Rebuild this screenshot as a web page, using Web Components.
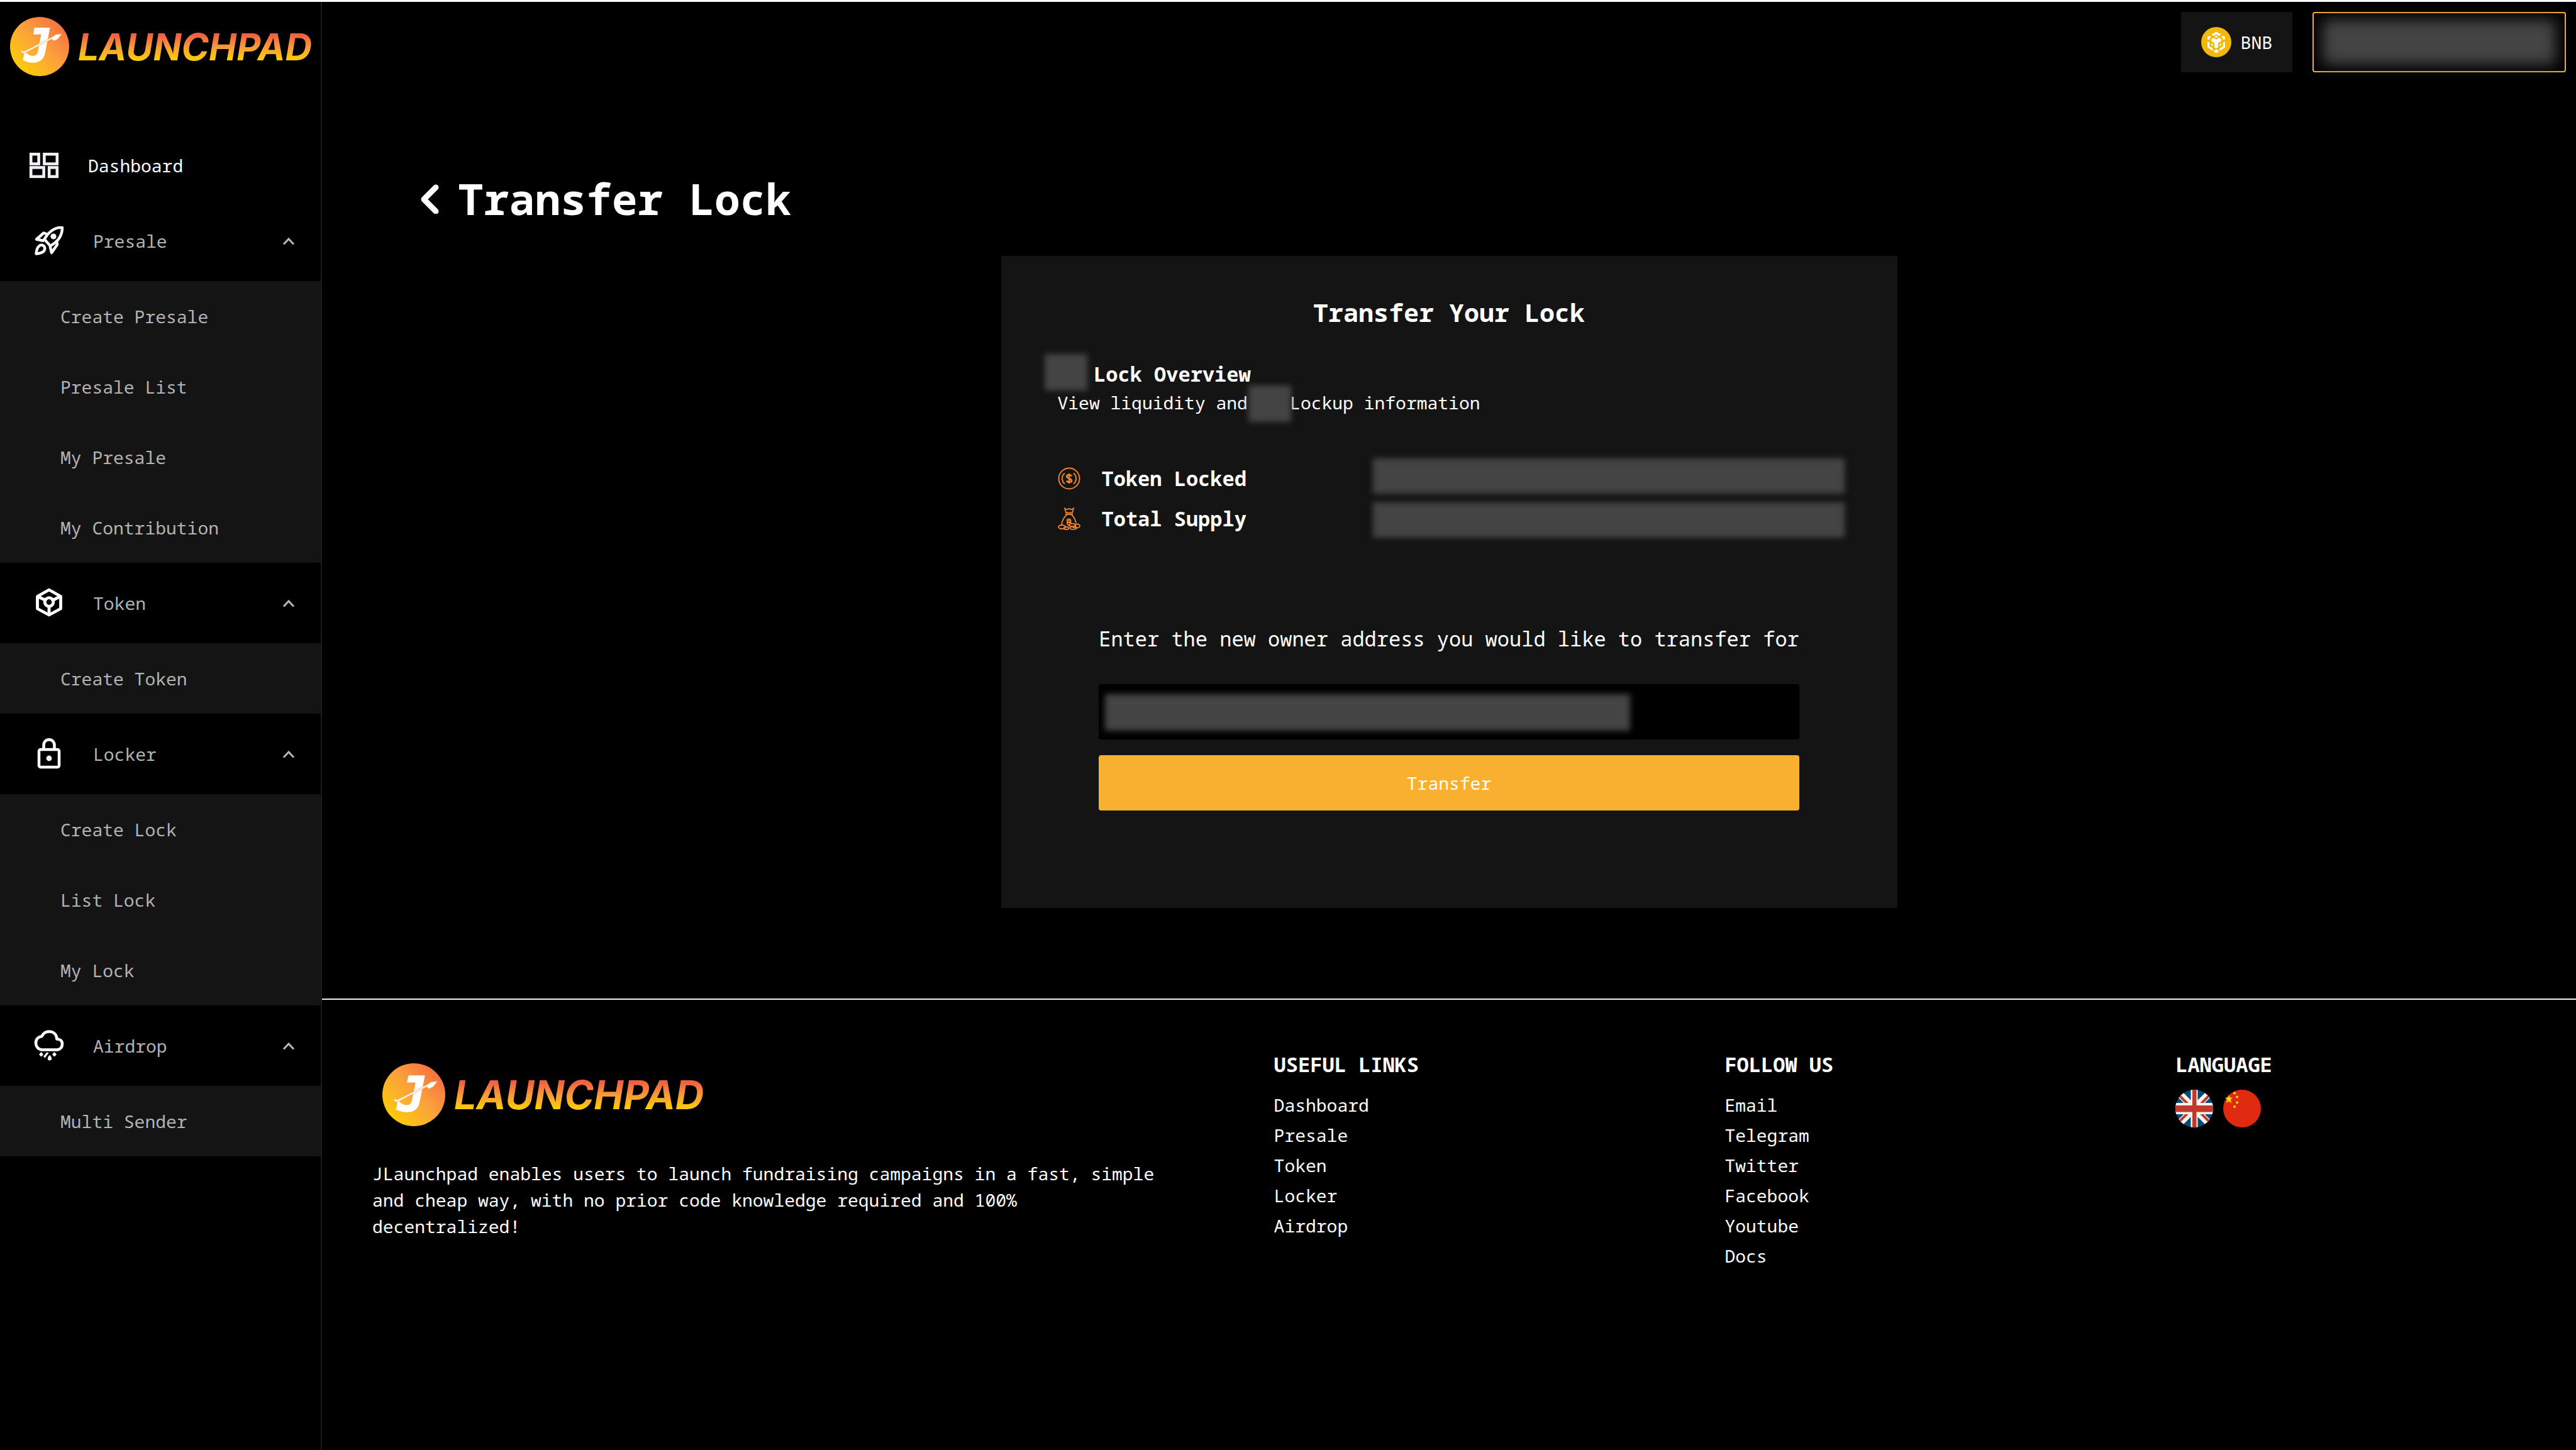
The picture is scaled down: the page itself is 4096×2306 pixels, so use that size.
<!DOCTYPE html>
<html lang="en">
<head>
<meta charset="utf-8">
<title>Transfer Lock</title>
<style>
  html, body { margin: 0; background: #000; }
  body { font-family: "Noto Sans Mono", "DejaVu Sans Mono", monospace; font-size: 28px; line-height: 42px; color: #fff; }
</style>
</head>
<body>
<launchpad-app></launchpad-app>

<script>
const define = (name, html, connected) => {
  const tpl = document.createElement('template');
  tpl.innerHTML = html;
  customElements.define(name, class extends HTMLElement {
    constructor() {
      super();
      this.attachShadow({ mode: 'open' }).append(tpl.content.cloneNode(true));
    }
    connectedCallback() {
      if (connected) connected(this);
    }
  });
};

const ICONS = {
  dashboard: '<g fill="none" stroke="#f0f0f4" stroke-width="4.6"><rect x="3.2" y="7.2" width="12.4" height="15.4"/><rect x="24.4" y="7.2" width="20.4" height="15.4"/><rect x="3.2" y="28.4" width="20.4" height="14.4"/><rect x="32.2" y="28.4" width="12.6" height="14.4"/></g>',
  rocket: '<g fill="none" stroke="#fafafa" stroke-width="4.4" stroke-linejoin="round"><path d="M45 4C33 3 24 10 16.500 22.500L26 33C37 27 45 17 45 4Z"/><path d="M21 14.500L15.500 12.500L4 22.500L16 25"/><path d="M36 24L37 31L28 44L25.500 33"/><path d="M17 35.500C16 31.500 11 30.500 8 33.500C4.500 36 4 41 3.500 45.500C9 45 13 44.500 15.500 41.500C17 40 17.500 37.500 17 35.500Z"/></g><circle cx="31" cy="18" r="4.600" fill="#fafafa"/>',
  token: '<g fill="none" stroke="#fff" stroke-width="4.800" stroke-linejoin="round"><path d="M24 4L42.500 14.500V34L24 44L5.500 34V14.500Z"/><circle cx="24" cy="23.500" r="6.800"/><path d="M6 14.500L18 20.500M42 14.500L30 20.500M24 30.500V43"/></g>',
  locker: '<g fill="none" stroke="#fff" stroke-width="4.500"><rect x="8" y="18" width="32" height="28" rx="2.500"/><path d="M15.500 18V11C15.500 6 19 2.300 24 2.300S32.500 6 32.500 11V18"/></g><circle cx="24" cy="32" r="4.400" fill="#fff"/>',
  airdrop: '<path d="M12 31.500C6 30.500 3 26 3 20.500C3 15 6.500 11 12.500 10C15 5 19 2.500 24 2.500C31 2.500 36 7 36.500 14.500C41.500 14.500 45 17.500 45 22C45 27.500 42 31 37 31.500Z" fill="none" stroke="#fff" stroke-width="4.600" stroke-linejoin="round"/><path d="M11.500 35l3.500 4-3.500 3.500-3.500-3.500ZM32.500 35l3.500 4-3.500 3.500-3.500-3.500ZM20.500 35.500l3 1-6 8-2.500-2.500ZM25 40c4.500 4 4 8.500 0 8.500s-4.500-4.500 0-8.500Z" fill="#fff"/>'
};

/* Brand mark and wordmark */
define('brand-logo', `
<style>
  :host { display: flex; align-items: center; gap: 14px; --mark: 94px; --word: 59px; }
  :host([large]) { --mark: 100px; --word: 63px; }
  svg { width: var(--mark); height: var(--mark); flex: none; }
  .word { font: italic 700 var(--word)/1 Inter, "Liberation Sans", sans-serif; padding-right: 6px;
    background: linear-gradient(#f1603f 18%, #f79a3a 50%, #fdc90a 82%); -webkit-background-clip: text; background-clip: text; color: transparent; }
</style>
<svg viewBox="0 0 94 94" aria-hidden="true">
  <defs><linearGradient id="g" x1=".15" y1=".85" x2=".85" y2=".15"><stop offset="0" stop-color="#fdca0c"/><stop offset=".55" stop-color="#fba03c"/><stop offset="1" stop-color="#f77440"/></linearGradient></defs>
  <circle cx="47" cy="47" r="47" fill="url(#g)"/>
  <text x="22" y="71" font-family="DejaVu Sans Mono, monospace" font-weight="700" font-style="italic" font-size="72" fill="#fff" stroke="#fff" stroke-width="1.5">J</text>
  <path d="M17 54Q19 60 26 56L66 35L70 38L76 35L82 27L73 28L67 32L26 53Q20 56 19 53Z" fill="#fff" stroke="#f9b27a" stroke-width=".8"/>
</svg>
<span class="word">LAUNCHPAD</span>`);

define('side-icon', `
<style>
  :host { display: block; width: 48px; height: 50px; flex: none; }
  svg { display: block; width: 100%; height: 100%; }
</style>
<svg viewBox="0 0 48 50" aria-hidden="true"></svg>`, el => {
  el.shadowRoot.querySelector('svg').innerHTML = ICONS[el.getAttribute('name')];
});

define('nav-group', `
<style>
  :host { display: block; }
  button { all: unset; box-sizing: border-box; display: flex; align-items: center; gap: 46px; width: 100%; height: 128px; padding: 0 41px 0 54px; color: #b3b3b3; cursor: pointer; }
  .name { flex: 1; }
  .chev { width: 20px; height: 14px; }
  .items { background: #141414; }
</style>
<button type="button" aria-expanded="true"><slot name="icon"></slot><span class="name"><slot name="label"></slot></span>
<svg class="chev" viewBox="0 0 20 14" aria-hidden="true"><path d="M2 12.500L10 4L18 12.500" fill="none" stroke="#b8b8b8" stroke-width="3"/></svg></button>
<div class="items"><slot></slot></div>`);

define('nav-item', `
<style>
  :host { display: block; }
  a { display: flex; align-items: center; height: 112px; padding-left: 96px; color: #b3b3b3; text-decoration: none; }
  :host([top]) a { padding-left: 46px; gap: 46px; color: #fff; }
</style>
<a href="#"><slot name="icon"></slot><slot></slot></a>`);

define('side-bar', `
<style>
  :host { display: block; box-sizing: border-box; width: 512px; flex: none; border-right: 2px solid #1c1c1c; }
  header { box-sizing: border-box; height: 204px; padding: 24px 16px; }
</style>
<header><brand-logo></brand-logo></header>
<nav>
  <nav-item top><side-icon slot="icon" name="dashboard"></side-icon>Dashboard</nav-item>
  <nav-group><side-icon slot="icon" name="rocket"></side-icon><span slot="label">Presale</span>
    <nav-item>Create Presale</nav-item><nav-item>Presale List</nav-item><nav-item>My Presale</nav-item><nav-item>My Contribution</nav-item></nav-group>
  <nav-group><side-icon slot="icon" name="token"></side-icon><span slot="label">Token</span>
    <nav-item>Create Token</nav-item></nav-group>
  <nav-group><side-icon slot="icon" name="locker"></side-icon><span slot="label">Locker</span>
    <nav-item>Create Lock</nav-item><nav-item>List Lock</nav-item><nav-item>My Lock</nav-item></nav-group>
  <nav-group><side-icon slot="icon" name="airdrop"></side-icon><span slot="label">Airdrop</span>
    <nav-item>Multi Sender</nav-item></nav-group>
</nav>`);

/* Blurred block that hides private values */
define('hidden-value', `<style>:host{display:block;background:#444;filter:blur(5px)}</style>`);

define('top-bar', `
<style>
  :host { display: flex; justify-content: flex-end; gap: 32px; padding: 16px 16px 0 0; height: 96px; }
  button { font: inherit; color: #fff; margin: 0; box-sizing: border-box; height: 96px; cursor: pointer; }
  .chain { display: flex; align-items: center; gap: 15px; border: 0; padding: 0 32px; background: #141414; }
  .chain svg { width: 48px; height: 48px; }
  .wallet { width: 403px; padding: 10px 14px; border: 2px solid #f9b02f; border-radius: 4px; background: #000; }
  hidden-value { height: 100%; filter: blur(11px); }
</style>
<button class="chain" type="button"><svg viewBox="0 0 48 48" aria-hidden="true"><circle cx="24" cy="24" r="24" fill="#f0b90b"/>
<g fill="#fff"><path d="M24 7.500l7.500 4.500-3.200 2-4.300-2.600-4.300 2.600-3.200-2Z"/><path d="M24 13.500l3 1.700-3 1.800-3-1.800Z"/><path d="M13 14l3.200 1.800-3 1.900v3l-3.200-1.700V15.800ZM35 14l3 1.800v3.200l-3.200 1.700v-3l-3-1.900Z"/><path d="M16.500 19l3.200-1.700 4.300 2.500 4.300-2.500 3.200 1.700v3.600l-4.500 2.600v7l-3 1.800-3-1.800v-7l-4.500-2.600Z"/><path d="M10 23l3.200 1.700v6l5.500 3.300v3.700L10 32.500ZM38 23l-3.200 1.700v6L29.300 34v3.700l8.700-5.200ZM16 26l2.600 1.500v2.800L16 28.800ZM32 26l-2.600 1.500v2.800l2.600-1.500ZM24 35.500l3.400 1.700v2.300L24 41.200l-3.400-1.700v-2.300Z"/></g></svg>BNB</button>
<button class="wallet" type="button" aria-label="Wallet"><hidden-value></hidden-value></button>`);

define('info-row', `
<style>
  :host { display: flex; align-items: center; gap: 34px; height: 64px; font-weight: 700; font-size: 32px; }
  .icon { display: flex; }
</style>
<span class="icon"><slot name="icon"></slot></span><span><slot></slot></span>`);

define('transfer-card', `
<style>
  :host { display: block; box-sizing: border-box; background: #141414; padding: 60px 84px 155px; }
  h2 { margin: 0; font-size: 40px; line-height: 60px; text-align: center; }
  h3 { margin: 0; font-size: 32px; line-height: 48px; }
  p { margin: 0; line-height: 42px; }
  .overview { margin-top: 44px; padding-left: 6px; }
  .gap { position: relative; display: inline-block; }
  h3 .gap { width: 3ch; }
  p .gap { width: 4ch; }
  .gap hidden-value { position: absolute; width: 68px; height: 58px; }
  h3 hidden-value { right: 10px; bottom: -14px; }
  p hidden-value { left: 1px; bottom: -20px; }
  .rows { display: flex; justify-content: space-between; margin-top: 68px; padding-left: 6px; }
  .values { display: grid; gap: 14px; grid-auto-rows: 56px; width: 750px; }
  svg { width: 36px; height: 36px; }
  form { width: max-content; margin: 135px auto 0; display: grid; }
  label { font-size: 32px; line-height: 48px; }
  .field { display: grid; margin-top: 48px; }
  .field > * { grid-area: 1 / 1; }
  input { box-sizing: border-box; width: 100%; height: 88px; border: 0; border-radius: 4px; background: #000; color: #fff; font: inherit; padding: 0 16px; }
  .field hidden-value { width: 75%; height: 58px; margin: 16px 10px; }
  form button { font: inherit; height: 88px; margin-top: 23px; border: 0; border-radius: 4px; background: #f9b02f; color: #fff; box-shadow: 0 4px 0 rgba(0,0,0,.05); }
</style>
<h2>Transfer Your Lock</h2>
<div class="overview">
  <h3><span class="gap"><hidden-value></hidden-value></span>Lock Overview</h3>
  <p>View liquidity and<span class="gap"><hidden-value></hidden-value></span>Lockup information</p>
</div>
<div class="rows">
  <div>
    <info-row><svg slot="icon" viewBox="0 0 36 36" aria-hidden="true"><g fill="none" stroke="#ec8434" stroke-width="2"><circle cx="18" cy="18" r="16.500"/><path d="M11 9.500C5.500 14 5.500 22 11 26.500M25 9.500C30.500 14 30.500 22 25 26.500"/><path d="M22 14.500C21 11.500 14 11.500 14 14.500C14 18 22 17.500 22 21.500C22 24.500 15 24.500 14 21.500M18 10V26" stroke-width="2.600"/></g></svg>Token Locked</info-row>
    <info-row><svg slot="icon" viewBox="0 0 36 36" aria-hidden="true"><g fill="none" stroke="#ec8434" stroke-width="1.800"><path d="M11 1.500L13 8.500H23L25 1.500L21 3.500L18 1.500L15 3.500ZM12 11H24M14 12C9 16 7 21 6 27M22 12C27 16 28 20 29 25"/><ellipse cx="6.500" cy="31" rx="5.500" ry="3"/><ellipse cx="13.500" cy="33" rx="4" ry="2"/><ellipse cx="23" cy="28" rx="4.500" ry="2.400"/><ellipse cx="24.500" cy="32.500" rx="5" ry="2.400"/><ellipse cx="31" cy="29.500" rx="4" ry="3"/><ellipse cx="17.500" cy="20" rx="2.500" ry="1.500"/><path d="M15 20V26L19 30M20.500 20V26M15 24H20M21 30L28 33M28 27V31"/></g></svg>Total Supply</info-row>
  </div>
  <div class="values"><hidden-value></hidden-value><hidden-value></hidden-value></div>
</div>
<form onsubmit="return false">
  <label for="owner">Enter the new owner address you would like to transfer for</label>
  <div class="field"><input id="owner" type="text"><hidden-value></hidden-value></div>
  <button type="submit">Transfer</button>
</form>`);

define('link-list', `
<style>
  :host { display: block; box-sizing: border-box; padding: 0 80px; }
  h3 { margin: 0 0 16px; font-size: 32px; line-height: 48px; }
  nav { display: flex; flex-direction: column; }
  ::slotted(a) { color: #fff; text-decoration: none; line-height: 48px; }
</style>
<h3><slot name="title"></slot></h3><nav><slot></slot></nav>`);

define('page-footer', `
<style>
  :host { display: grid; grid-template-columns: 2fr 1fr 1fr 1fr; border-top: 2px solid #f0f0f0; padding-top: 79px; }
  .about { padding: 22px 80px 0; }
  brand-logo { margin: 0 16px; }
  p { margin: 54px 0 0; }
  .flags { display: flex; gap: 16px; }
  .flags button { border: 0; padding: 0; background: none; width: 60px; height: 60px; }
  svg { display: block; width: 60px; height: 60px; }
</style>
<div class="about"><brand-logo large></brand-logo>
<p>JLaunchpad enables users to launch fundraising campaigns in a fast, simple and cheap way, with no prior code knowledge required and 100% decentralized!</p></div>
<link-list><span slot="title">USEFUL LINKS</span><a href="#">Dashboard</a><a href="#">Presale</a><a href="#">Token</a><a href="#">Locker</a><a href="#">Airdrop</a></link-list>
<link-list><span slot="title">FOLLOW US</span><a href="#">Email</a><a href="#">Telegram</a><a href="#">Twitter</a><a href="#">Facebook</a><a href="#">Youtube</a><a href="#">Docs</a></link-list>
<link-list><span slot="title">LANGUAGE</span><div class="flags">
<button type="button" aria-label="English"><svg viewBox="0 0 60 60"><clipPath id="c"><circle cx="30" cy="30" r="30"/></clipPath><g clip-path="url(#c)"><path fill="#024a77" d="M0 0H60V60H0Z"/><path d="M5 5L55 55M55 5L5 55" stroke="#f8f6f0" stroke-width="11"/><path d="M6 9L21 24M54 9L39 24M6 51L21 36M54 51L39 36" stroke="#c1392b" stroke-width="4"/><path fill="#f8f6f0" d="M24.500 0h11v60h-11ZM0 21h60v18H0Z"/><path fill="#c1392b" d="M27 0h6.500v60H27ZM0 25h60v10.500H0Z"/></g></svg></button>
<button type="button" aria-label="Chinese"><svg viewBox="0 0 60 60"><circle cx="30" cy="30" r="30" fill="#e02a10"/><g fill="#ffd500"><path d="M9 8l1.700 4.400h4.300l-3.200 3.300 1.300 5.500L9 18.300 4.900 21.200l1.300-5.500L3 12.400h4.300Z"/><circle cx="18" cy="5.500" r="2"/><circle cx="22" cy="11.500" r="2"/><circle cx="22" cy="20.500" r="2"/><circle cx="18" cy="27" r="2"/></g></svg></button></div></link-list>`);

define('launchpad-app', `
<style>
  :host { display: flex; box-sizing: border-box; min-height: 100vh; border-top: 3px solid #fff; }
  .main { flex: 1; min-width: 0; display: flex; flex-direction: column; }
  .content { padding: 0 82px; }
  .title { display: flex; align-items: center; gap: 30px; margin: 159px 0 49px 74px; }
  .title button { all: unset; display: flex; cursor: pointer; }
  .title svg { width: 30px; height: 48px; }
  h1 { margin: 0; font-size: 68px; line-height: 84px; }
  transfer-card { width: 41.6667%; margin: 0 auto 144px; }
</style>
<side-bar></side-bar>
<div class="main">
  <top-bar></top-bar>
  <div class="content">
    <div class="title"><button type="button" aria-label="Back"><svg viewBox="0 0 30 48"><path d="M25 6L6 25L25 44" fill="none" stroke="#fff" stroke-width="9" stroke-linecap="round" stroke-linejoin="round"/></svg></button><h1>Transfer Lock</h1></div>
    <transfer-card></transfer-card>
  </div>
  <page-footer></page-footer>
</div>`);
</script>
</body>
</html>
